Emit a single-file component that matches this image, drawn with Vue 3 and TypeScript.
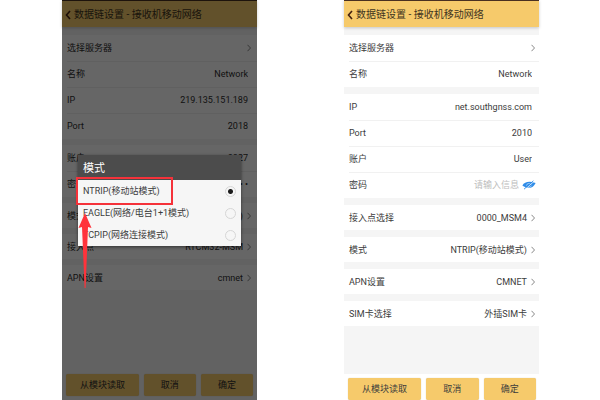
<script setup lang="ts">
import { ref } from 'vue'

type Kind = 'link' | 'text' | 'password'

interface Row {
  label: string
  value: string
  kind: Kind
  hint?: string
}

interface Screen {
  id: string
  modal: boolean
  groups: Row[][]
}

const title = '数据链设置 - 接收机移动网络'
const actions = ['从模块读取', '取消', '确定']

const screens = ref<Screen[]>([
  {
    id: 'picking',
    modal: true,
    groups: [
      [
        { label: '选择服务器', value: '', kind: 'link' },
        { label: '名称', value: 'Network', kind: 'text' },
        { label: 'IP', value: '219.135.151.189', kind: 'text' },
        { label: 'Port', value: '2018', kind: 'text' },
      ],
      [
        { label: '账户', value: '0827', kind: 'text' },
        { label: '密码', value: '• • • •', kind: 'text' },
      ],
      [{ label: '模式', value: 'NTRIP(移动站模式)', kind: 'link' }],
      [{ label: '接入点', value: 'RTCM32-MSM', kind: 'link' }],
      [{ label: 'APN设置', value: 'cmnet', kind: 'link' }],
    ],
  },
  {
    id: 'form',
    modal: false,
    groups: [
      [
        { label: '选择服务器', value: '', kind: 'link' },
        { label: '名称', value: 'Network', kind: 'text' },
      ],
      [
        { label: 'IP', value: 'net.southgnss.com', kind: 'text' },
        { label: 'Port', value: '2010', kind: 'text' },
        { label: '账户', value: 'User', kind: 'text' },
        { label: '密码', value: '', kind: 'password', hint: '请输入信息' },
      ],
      [{ label: '接入点选择', value: '0000_MSM4', kind: 'link' }],
      [{ label: '模式', value: 'NTRIP(移动站模式)', kind: 'link' }],
      [{ label: 'APN设置', value: 'CMNET', kind: 'link' }],
      [{ label: 'SIM卡选择', value: '外插SIM卡', kind: 'link' }],
    ],
  },
])

const modes = ['NTRIP(移动站模式)', 'EAGLE(网络/电台1+1模式)', 'TCPIP(网络连接模式)']
const mode = ref(modes[0])
</script>

<template>
  <main class="page">
    <section v-for="s in screens" :key="s.id" class="phone" :class="s.id">
      <header class="bar">
        <button class="back" type="button" aria-label="返回">
          <svg viewBox="0 0 6 10" width="6" height="10"><path d="M5 1 1.5 5 5 9" /></svg>
        </button>
        <h1>{{ title }}</h1>
      </header>

      <div class="groups">
        <div v-for="(g, gi) in s.groups" :key="gi" class="group">
          <template v-for="(r, ri) in g" :key="r.label">
            <button v-if="r.kind === 'link'" class="row" type="button">
              <span class="label">{{ r.label }}</span>
              <span class="value">{{ r.value }}</span>
              <svg class="chevron" viewBox="0 0 4 8" width="4" height="8"><path d="M.5 .8 3.5 4 .5 7.2" /></svg>
            </button>
            <div v-else class="row" :class="r.kind">
              <label class="label" :for="`${s.id}-${gi}-${ri}`">{{ r.label }}</label>
              <input
                :id="`${s.id}-${gi}-${ri}`"
                v-model="r.value"
                :type="r.kind"
                :placeholder="r.hint"
              />
              <button v-if="r.kind === 'password'" class="eye" type="button" aria-label="显示密码">
                <svg viewBox="0 0 14 10" width="14" height="10">
                  <path class="iris" d="M.4 5.6C2.6 1.8 7 .8 13.6 3 11.6 8 5.6 10 .4 5.6Z" />
                  <path class="ring" d="M4.4 5.6c.2-2 3-2.9 4.8-1.4M5.8 7.2c1.6.4 3.2-.2 3.8-1.6" />
                  <path class="gap" d="M2.8 9.6 12 1.4" />
                  <path class="slash" d="M2 9.2 11.4.8" />
                </svg>
              </button>
            </div>
          </template>
        </div>
      </div>

      <footer class="actions">
        <button v-for="a in actions" :key="a" type="button">{{ a }}</button>
      </footer>

      <div v-if="s.modal" class="scrim">
        <div class="dialog" role="dialog" aria-labelledby="mode-title">
          <h2 id="mode-title">模式</h2>
          <label v-for="m in modes" :key="m" class="option">
            <span>{{ m }}</span>
            <input v-model="mode" type="radio" name="mode" :value="m" />
          </label>
          <svg class="pointer" viewBox="0 0 100 114" width="100" height="114" aria-hidden="true">
            <rect x="3" y="3" width="95" height="26" />
            <path d="M11 38 17.5 53 14 52 11.6 113 10.6 113 8 52 4.5 53Z" />
          </svg>
        </div>
      </div>
    </section>
  </main>
</template>

<style>
body {
  margin: 0;
  background: #fff;
}
</style>

<style scoped>
.page {
  display: grid;
  grid-template-columns: 62fr 195fr 87fr 195fr 61fr;
  min-height: 100vh;
  font-family: Roboto, 'Noto Sans CJK SC', sans-serif;
  font-size: 9px;
  line-height: 12px;
  color: #3c3c3c;
}

button,
input {
  font: inherit;
  color: inherit;
  border: 0;
  padding: 0;
  margin: 0;
  background: none;
}

svg {
  display: block;
  fill: none;
}

.phone {
  --gap: 7px;
  --edge: 7px;
  position: relative;
  grid-column: 4;
  grid-row: 1;
  display: flex;
  flex-direction: column;
  min-width: 0;
  background: #f5f5f5;
}

.phone.picking {
  --gap: 6px;
  --edge: 9px;
  grid-column: 2;
  color: #2e2e2e;
}

.bar {
  display: flex;
  align-items: center;
  gap: 3px;
  height: 26px;
  padding: 1px 0 0 3px;
  box-sizing: border-box;
  height: 27px;
  border-top: 1px solid #4a3020;
  background: #f6ca6b;
  box-shadow: 0 1px 3px rgba(0, 0, 0, 0.2);
}

.back path {
  stroke: #43200f;
  stroke-width: 1.6;
}

h1,
h2 {
  margin: 0;
  font-weight: 400;
  white-space: nowrap;
}

h1 {
  font-size: 10px;
  line-height: 14px;
  color: #3f3420;
}

.groups {
  flex: 1;
  display: flex;
  flex-direction: column;
  gap: var(--gap);
  padding-top: 8px;
}

.group {
  background: #fff;
}

.row {
  display: flex;
  align-items: center;
  width: 100%;
  height: 26px;
  padding: 0 var(--edge) 0 5px;
  box-sizing: border-box;
  text-align: left;
}

button.row {
  gap: 4px;
  padding-right: calc(var(--edge) - 3px);
}

.row:only-child {
  height: 25px;
}

.row + .row {
  background: linear-gradient(#f1f1f1, #f1f1f1) 5px 0 / 100% 1px no-repeat;
}

.label {
  flex: none;
}

.value {
  flex: 1;
  text-align: right;
  white-space: nowrap;
}

.row input {
  flex: 1;
  min-width: 0;
  text-align: right;
  outline: none;
}

.row input::placeholder {
  color: #bdbdbd;
  opacity: 1;
}

.chevron path {
  stroke: #7c7c7c;
  stroke-width: 0.9;
}

.row.password {
  gap: 3px;
  padding-right: 3px;
}

.eye .iris {
  fill: #2f8ce8;
}

.eye .ring {
  stroke: #cfe5fa;
  stroke-width: 0.7;
}

.eye .gap {
  stroke: #fff;
  stroke-width: 0.7;
}

.eye .slash {
  stroke: #2f8ce8;
  stroke-width: 0.9;
}

.actions {
  display: grid;
  grid-template-columns: 74fr 53fr 53fr;
  gap: 5px;
  padding: 4px 3px 0 4px;
  background: #fff;
}

.picking .actions {
  padding: 4px;
  background: #f5f5f5;
}

.actions button {
  height: 22px;
  border-radius: 2px;
  background: #f6ca6b;
  box-shadow: 0 0 1px rgba(120, 80, 0, 0.4);
}

.scrim {
  position: absolute;
  inset: 0;
  padding: 155px 16px 0;
  background: rgba(0, 0, 0, 0.6);
}

.dialog {
  position: relative;
  color: #3c3c3c;
  background: #f6f6f6;
  box-shadow: 0 1px 3px rgba(0, 0, 0, 0.5);
}

h2 {
  padding: 7px 5px 4px;
  font-size: 11px;
  line-height: 14px;
  color: #fff;
  background: #4c4c4c;
}

.option {
  display: flex;
  align-items: center;
  justify-content: space-between;
  height: 22px;
  padding: 0 5px;
  white-space: nowrap;
}

.option input {
  appearance: none;
  width: 11px;
  height: 11px;
  border: 1px solid #d6d6d6;
  border-radius: 50%;
}

.option input:checked {
  background: radial-gradient(circle, #1c1c1c 2px, transparent 3px);
}

.pointer {
  position: absolute;
  left: -4px;
  top: 20px;
}

.pointer rect {
  stroke: #f5323a;
  stroke-width: 2;
}

.pointer path {
  fill: #ff333b;
}
</style>
